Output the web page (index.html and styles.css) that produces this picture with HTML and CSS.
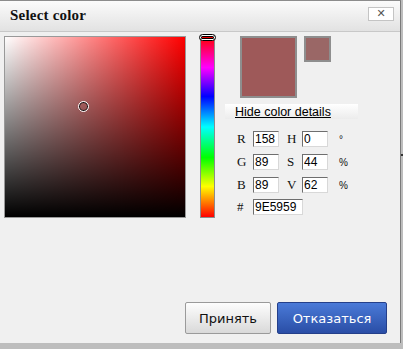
FILE: index.html
```html
<!DOCTYPE html>
<html lang="en">
<head>
    <meta charset="UTF-8" />
    <title>Select color</title>
    <link rel="stylesheet" href="styles.css">
</head>
<body>

    <div class="dialog">
        <div class="titlebar">
            <span class="title">Select color</span>
            <button class="close-btn">&#10005;</button>
        </div>

        <div class="picker">
            <div class="sv-box">
                <div class="sv-marker"></div>
            </div>

            <div class="hue-bar">
                <div class="hue-marker"></div>
            </div>

            <div class="details">
                <div class="swatches">
                    <div class="swatch-new"></div>
                    <div class="swatch-old"></div>
                </div>

                <div class="toggle-bar"><a href="#">Hide color details</a></div>

                <div class="fields">
                    <div class="field-row">
                        <label>R</label><input type="text" value="158">
                        <label class="second">H</label><input type="text" value="0">
                        <span class="unit">°</span>
                    </div>
                    <div class="field-row">
                        <label>G</label><input type="text" value="89">
                        <label class="second">S</label><input type="text" value="44">
                        <span class="unit">%</span>
                    </div>
                    <div class="field-row">
                        <label>B</label><input type="text" value="89">
                        <label class="second">V</label><input type="text" value="62">
                        <span class="unit">%</span>
                    </div>
                    <div class="field-row">
                        <label>#</label><input type="text" class="hex" value="9E5959">
                    </div>
                </div>
            </div>
        </div>

        <div class="footer">
            <button class="btn btn-accept">Принять</button>
            <button class="btn btn-cancel">Отказаться</button>
        </div>
    </div>

    <div class="edge-mark"></div>

</body>
</html>
```

FILE: styles.css
```css
* {
    box-sizing: border-box;
}

body {
    margin: 0;
    width: 403px;
    height: 349px;
    background: #bdbdbd;
    font-family: "Liberation Sans", Arial, sans-serif;
    overflow: hidden;
    position: relative;
}

.dialog {
    width: 401px;
    height: 343px;
    background: #f0f0f0;
    border-top: 1px solid #8c8c8c;
    border-right: 1px solid #7a7a7a;
    display: flex;
    flex-direction: column;
}

/* --- title bar --- */
.titlebar {
    height: 31px;
    flex-shrink: 0;
    display: flex;
    align-items: center;
    justify-content: space-between;
    padding: 0 6px 1px 10px;
    background: linear-gradient(to bottom, #fbfbfb, #e2e2e2);
    border-bottom: 1px solid #c8c8c8;
}

.title {
    font-family: "Liberation Serif", "Times New Roman", serif;
    font-weight: bold;
    font-size: 15px;
    color: #111;
    letter-spacing: 0.2px;
}

.close-btn {
    width: 26px;
    height: 14px;
    margin-top: -4px;
    padding: 0;
    background: #fff;
    border: 1px solid #c4c4c4;
    color: #555;
    font-size: 11px;
    font-weight: bold;
    line-height: 12px;
    font-family: "DejaVu Sans", sans-serif;
}

/* --- picker area --- */
.picker {
    flex: 1;
    display: flex;
    padding: 4px 0 0 4px;
}

.sv-box {
    width: 182px;
    height: 182px;
    border: 1px solid #999;
    position: relative;
    background:
        linear-gradient(to bottom, rgba(0, 0, 0, 0), #000),
        linear-gradient(to right, #fff, rgba(255, 255, 255, 0)),
        #ff0000;
}

.sv-marker {
    position: absolute;
    left: 73px;
    top: 64px;
    width: 11px;
    height: 11px;
    border-radius: 50%;
    border: 1px solid #fff;
    box-shadow: inset 0 0 0 1px #111;
}

.hue-bar {
    width: 15px;
    height: 182px;
    margin-left: 14px;
    border: 1px solid #8c8c8c;
    position: relative;
    background: linear-gradient(to bottom, #ff0000 0%, #ff00ff 17%, #0000ff 33%, #00ffff 50%, #00ff00 67%, #ffff00 83%, #ff0000 100%);
}

.hue-marker {
    position: absolute;
    left: -2px;
    top: -3px;
    width: 17px;
    height: 7px;
    border: 1px solid #000;
    border-radius: 4px;
    background: #fff;
    box-shadow: inset 0 0 0 1px #fff, inset 0 0 0 2px #000;
}

.hue-marker::after {
    content: "";
    position: absolute;
    left: 2px;
    right: 2px;
    top: 2px;
    height: 1px;
    background: #e00;
}

/* --- details column --- */
.details {
    margin-left: 10px;
    width: 133px;
}

.swatches {
    display: flex;
    align-items: flex-start;
    padding-left: 15px;
}

.swatch-new {
    width: 57px;
    height: 62px;
    background: #9e5959;
    border: 2px solid #8e8e8e;
}

.swatch-old {
    width: 27px;
    height: 26px;
    margin-left: 7px;
    background: #9a6766;
    border: 2px solid #8e8e8e;
}

.toggle-bar {
    margin-top: 6px;
    height: 15px;
    padding-left: 10px;
    background: linear-gradient(to bottom, #ffffff, #ececec);
    line-height: 14px;
}

.toggle-bar a {
    color: #000;
    font-size: 12.5px;
    text-decoration: underline;
}

.fields {
    margin-top: 12px;
    padding-left: 12px;
}

.field-row {
    display: flex;
    align-items: center;
    height: 16px;
    margin-bottom: 7px;
}

.field-row:last-child {
    margin-bottom: 0;
    margin-top: -1px;
}

.field-row label {
    width: 16px;
    font-family: "Liberation Serif", "Times New Roman", serif;
    font-size: 13px;
    color: #111;
}

.field-row label.second {
    width: 15px;
    margin-left: 8px;
}

.field-row input {
    width: 26px;
    height: 16px;
    padding: 0 1px;
    font-family: "Liberation Sans", Arial, sans-serif;
    font-size: 12px;
    color: #000;
    background: #fff;
    border: 1px solid;
    border-color: #6e6e6e #d8d8d8 #d8d8d8 #6e6e6e;
    outline: none;
}

.field-row input.hex {
    width: 50px;
}

.unit {
    margin-left: 11px;
    font-size: 10px;
    color: #111;
}

/* --- footer buttons --- */
.footer {
    display: flex;
    justify-content: flex-end;
    gap: 6px;
    padding: 0 13px 9px 0;
}

.btn {
    height: 32px;
    font-family: "DejaVu Sans", Tahoma, sans-serif;
    font-size: 13px;
    border-radius: 2px;
    padding: 0;
}

.btn-accept {
    width: 86px;
    color: #111;
    background: linear-gradient(to bottom, #fdfdfd, #d9d9d9);
    border: 1px solid #9a9a9a;
}

.btn-cancel {
    width: 110px;
    color: #fff;
    background: linear-gradient(to bottom, #4a7ad8, #2a4ea6);
    border: 1px solid #243f8a;
}

.edge-mark {
    position: absolute;
    left: 401px;
    top: 154px;
    width: 2px;
    height: 2px;
    background: #333;
}
```
